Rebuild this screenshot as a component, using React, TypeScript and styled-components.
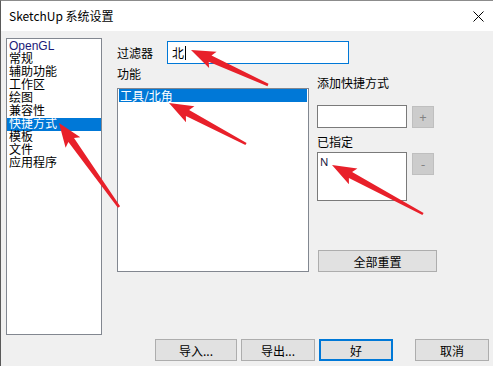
import React from 'react';
import styled, { createGlobalStyle } from 'styled-components';

const navItems = ['OpenGL', '常规', '辅助功能', '工作区', '绘图', '兼容性', '快捷方式', '模板', '文件', '应用程序'];
const selectedNav = '快捷方式';

// annotation arrows: tail -> tip
const arrows = [
  { from: [268, 85], to: [191, 50] },
  { from: [246, 144], to: [169, 103] },
  { from: [119, 207], to: [59, 123] },
  { from: [423, 214], to: [332, 165] },
];

const arrowPoints = (from: number[], to: number[]) => {
  const dx = to[0] - from[0];
  const dy = to[1] - from[1];
  const len = Math.hypot(dx, dy);
  const ux = dx / len, uy = dy / len;
  const nx = -uy, ny = ux;
  const head = 21;
  const bx = to[0] - ux * head, by = to[1] - uy * head;
  const pt = (x: number, y: number) => `${x.toFixed(1)},${y.toFixed(1)}`;
  return [
    pt(from[0] + nx * 1.3, from[1] + ny * 1.3),
    pt(bx + nx * 3.4, by + ny * 3.4),
    pt(bx - ux * 3 + nx * 9, by - uy * 3 + ny * 9),
    pt(to[0], to[1]),
    pt(bx - ux * 3 - nx * 9, by - uy * 3 - ny * 9),
    pt(bx - nx * 3.4, by - ny * 3.4),
    pt(from[0] - nx * 1.3, from[1] - ny * 1.3),
  ].join(' ');
};

const App = () => {
  return (
    <>
      <GlobalStyle />
      <Window>
        <TitleBar>
          <Title>SketchUp 系统设置</Title>
          <svg width="11" height="11" viewBox="0 0 11 11">
            <path d="M0.5 0.5 L10.5 10.5 M10.5 0.5 L0.5 10.5" stroke="#000" strokeWidth="1" />
          </svg>
        </TitleBar>
        <Body>
          <Top>
            <NavList>
              {navItems.map((item) => (
                <NavItem key={item} $selected={item === selectedNav} $latin={item === 'OpenGL'}>
                  {item}
                </NavItem>
              ))}
            </NavList>
            <Main>
              <FilterRow>
                <FieldLabel>过滤器</FieldLabel>
                <FilterInput>
                  北<Caret />
                </FilterInput>
              </FilterRow>
              <Columns>
                <FuncColumn>
                  <Label $top={3}>功能</Label>
                  <FuncList>
                    <FuncItem>工具/北角</FuncItem>
                  </FuncList>
                </FuncColumn>
                <ShortcutColumn>
                  <Label $top={12}>添加快捷方式</Label>
                  <BoxRow $top={16}>
                    <ShortcutBox $height={23} />
                    <SmallButton $offset={1}>+</SmallButton>
                  </BoxRow>
                  <Label $top={7}>已指定</Label>
                  <BoxRow $top={4}>
                    <ShortcutBox $height={49}>
                      <AssignedKey>N</AssignedKey>
                    </ShortcutBox>
                    <SmallButton $offset={1}>-</SmallButton>
                  </BoxRow>
                  <ResetButton>全部重置</ResetButton>
                </ShortcutColumn>
              </Columns>
            </Main>
          </Top>
          <Footer>
            <Button $width={82}>导入...</Button>
            <Button $width={74}>导出...</Button>
            <Button $width={74} $primary>好</Button>
            <Button $width={74} $gap={22}>取消</Button>
          </Footer>
        </Body>
        <Overlay width="493" height="366" viewBox="0 0 493 366">
          {arrows.map((a, i) => (
            <polygon key={i} points={arrowPoints(a.from, a.to)} fill="#e8202a" />
          ))}
        </Overlay>
      </Window>
    </>
  );
};

export default App;

const GlobalStyle = createGlobalStyle`
  html, body {
    margin: 0;
    padding: 0;
    overflow: hidden;
    background: #f0f0f0;
  }
  * {
    box-sizing: border-box;
  }
`;

const Window = styled.div`
  position: relative;
  width: 493px;
  height: 366px;
  background: #f0f0f0;
  border-left: 1px solid #5a5a5a;
  border-top: 1px solid #8c8c8c;
  font-family: "Noto Sans CJK SC", "Noto Sans", sans-serif;
  font-size: 12px;
  color: #000;
  overflow: hidden;
`;

const TitleBar = styled.div`
  height: 30px;
  background: #fff;
  display: flex;
  align-items: center;
  justify-content: space-between;
  padding: 0 9px 0 8px;
`;

const Title = styled.div`
  font-size: 12px;
  line-height: 14px;
  margin-top: -1px;
`;

const Body = styled.div`
  padding: 7px 0 0 5px;
`;

const Top = styled.div`
  display: flex;
  height: 297px;
`;

const NavList = styled.div`
  width: 96px;
  height: 297px;
  background: #fff;
  border: 1px solid #828790;
  padding-top: 1px;
`;

const NavItem = styled.div<{ $selected?: boolean; $latin?: boolean }>`
  height: 13px;
  line-height: 13px;
  padding-left: 2px;
  white-space: nowrap;
  font-family: "Liberation Sans", "Noto Sans CJK SC", sans-serif;
  background: ${(p) => (p.$selected ? '#0078d7' : 'transparent')};
  color: ${(p) => (p.$selected ? '#fff' : p.$latin ? '#1a1a78' : '#000')};
`;

const Main = styled.div`
  margin-left: 15px;
  padding-top: 3px;
`;

const FilterRow = styled.div`
  display: flex;
  align-items: center;
  height: 23px;
`;

const FieldLabel = styled.div`
  width: 50px;
  line-height: 13px;
`;

const FilterInput = styled.div`
  width: 182px;
  height: 23px;
  background: #fff;
  border: 1px solid #0078d7;
  display: flex;
  align-items: center;
  padding-left: 4px;
  line-height: 13px;
`;

const Caret = styled.span`
  display: inline-block;
  width: 1px;
  height: 14px;
  margin-left: 1px;
  background: #000;
`;

const Columns = styled.div`
  display: flex;
`;

const FuncColumn = styled.div`
  width: 192px;
  display: flex;
  flex-direction: column;
`;

const Label = styled.div<{ $top: number }>`
  margin-top: ${(p) => p.$top}px;
  line-height: 13px;
  height: 13px;
  white-space: nowrap;
`;

const FuncList = styled.div`
  margin-top: 8px;
  width: 192px;
  height: 184px;
  background: #fff;
  border: 1px solid #828790;
  padding: 0 1px;
`;

const FuncItem = styled.div`
  height: 13px;
  line-height: 13px;
  background: #0078d7;
  color: #fff;
  padding-left: 1px;
`;

const ShortcutColumn = styled.div`
  margin-left: 8px;
  display: flex;
  flex-direction: column;
`;

const BoxRow = styled.div<{ $top: number }>`
  display: flex;
  align-items: flex-start;
  margin-top: ${(p) => p.$top}px;
`;

const ShortcutBox = styled.div<{ $height: number }>`
  width: 90px;
  height: ${(p) => p.$height}px;
  background: #fff;
  border: 1px solid #7a7a7a;
  padding: 2px 0 0 2px;
`;

const AssignedKey = styled.div`
  font-family: "Noto Sans", sans-serif;
  font-size: 11px;
  line-height: 13px;
  color: #1a1a40;
`;

const SmallButton = styled.div<{ $offset: number }>`
  width: 22px;
  height: 22px;
  margin-left: ${(p) => 4 + p.$offset}px;
  margin-top: ${(p) => p.$offset}px;
  background: #cccccc;
  border: 1px solid #bfbfbf;
  color: #838383;
  display: flex;
  align-items: center;
  justify-content: center;
  font-family: "Noto Sans", sans-serif;
  font-size: 13px;
`;

const ResetButton = styled.div`
  margin-top: 49px;
  margin-left: 1px;
  width: 119px;
  height: 22px;
  background: #e1e1e1;
  border: 1px solid #adadad;
  display: flex;
  align-items: center;
  justify-content: center;
`;

const Footer = styled.div`
  display: flex;
  justify-content: flex-end;
  gap: 4px;
  margin-top: 4px;
  padding-right: 4px;
`;

const Button = styled.div<{ $width: number; $primary?: boolean; $gap?: number }>`
  width: ${(p) => p.$width}px;
  height: 22px;
  margin-left: ${(p) => (p.$gap ? p.$gap - 4 : 0)}px;
  background: #e1e1e1;
  border: ${(p) => (p.$primary ? '2px solid #0078d7' : '1px solid #adadad')};
  display: flex;
  align-items: center;
  justify-content: center;
`;

const Overlay = styled.svg`
  position: absolute;
  left: -1px;
  top: -1px;
  pointer-events: none;
`;
